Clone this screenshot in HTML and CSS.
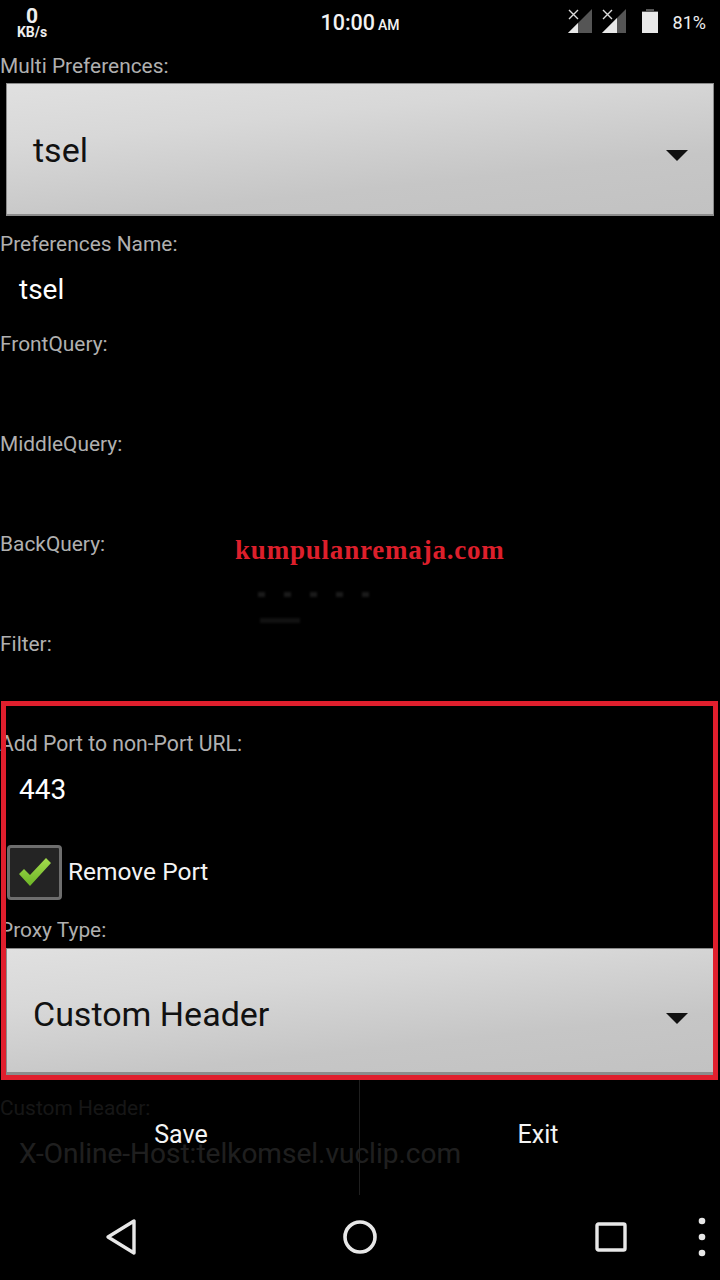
FILE: index.html
```html
<!DOCTYPE html>
<html lang="en">
<head>
<meta charset="utf-8">
<title>Preferences</title>
<link rel="stylesheet" href="styles.css">
</head>
<body>
<div class="screen">
  <header class="status">
    <div class="speed"><span class="speed-num">0</span><span class="speed-unit">KB/s</span></div>
    <div class="clock">10:00<span class="ampm">AM</span></div>
    <div class="indicators">
      <svg class="sig sig-a" width="26" height="26" viewBox="0 0 26 26">
        <path d="M25 1V25H1Z" fill="#555"/><path d="M11 15V25H1Z" fill="#e8e8e8"/>
        <path d="M2 2L11 11M11 2L2 11" stroke="#ddd" stroke-width="1.4" fill="none"/>
      </svg>
      <svg class="sig sig-b" width="26" height="26" viewBox="0 0 26 26">
        <path d="M25 1V25H1Z" fill="#555"/><path d="M16 10V25H1Z" fill="#e8e8e8"/>
        <path d="M2 2L11 11M11 2L2 11" stroke="#ddd" stroke-width="1.4" fill="none"/>
      </svg>
      <svg class="batt" width="16" height="26" viewBox="0 0 16 26">
        <path d="M4 1H12V3H16V25H0V3H4Z" fill="#e8e8e8"/><path d="M4 1H12V3H16V4H0V3H4Z" fill="#555"/>
      </svg>
      <span class="pct">81%</span>
    </div>
  </header>

  <main class="form">
    <label class="lbl">Multi Preferences:</label>
    <div class="spinner spinner-a"><span>tsel</span><i class="arrow"></i></div>

    <label class="lbl lbl-after-spin">Preferences Name:</label>
    <div class="field">tsel</div>
    <label class="lbl">FrontQuery:</label>
    <div class="field"></div>
    <label class="lbl">MiddleQuery:</label>
    <div class="field"></div>
    <label class="lbl">BackQuery:</label>
    <div class="field"></div>
    <label class="lbl">Filter:</label>
    <div class="field"></div>
    <label class="lbl lbl-port">Add Port to non-Port URL:</label>
    <div class="field">443</div>

    <div class="check-row">
      <span class="check">
        <svg width="36" height="32" viewBox="0 0 36 32"><defs><linearGradient id="tick" x1="0" y1="0" x2="0" y2="1"><stop offset="0" stop-color="#a4dc4e"/><stop offset="1" stop-color="#6cb526"/></linearGradient></defs><path d="M2 18L7 13L13 19L29 2L34 7L13 30Z" fill="url(#tick)"/></svg>
      </span>
      <span class="check-text">Remove Port</span>
    </div>

    <label class="lbl lbl-proxy">Proxy Type:</label>
    <div class="spinner spinner-b"><span>Custom Header</span><i class="arrow"></i></div>

    <label class="lbl lbl-after-proxy">Custom Header:</label>
    <div class="field">X-Online-Host:telkomsel.vuclip.com</div>
  </main>

  <div class="watermark">kumpulanremaja.com</div>
  <div class="smudge smudge-a"></div>
  <div class="smudge smudge-b"></div>
  <div class="redbox"></div>

  <div class="actions">
    <button class="act act-save">Save</button>
    <button class="act act-exit">Exit</button>
  </div>

  <nav class="nav">
    <svg class="nav-back" width="32" height="38" viewBox="0 0 32 38"><path d="M29 3V35L3 19Z" fill="none" stroke="#e8e8e8" stroke-width="3.4" stroke-linejoin="round"/></svg>
    <svg class="nav-home" width="36" height="36" viewBox="0 0 36 36"><circle cx="18" cy="18" r="15" fill="none" stroke="#e8e8e8" stroke-width="3.6"/></svg>
    <svg class="nav-recent" width="32" height="30" viewBox="0 0 32 30"><rect x="2" y="2" width="28" height="26" rx="1.5" fill="none" stroke="#e8e8e8" stroke-width="3.4"/></svg>
    <svg class="nav-more" width="8" height="40" viewBox="0 0 8 40"><circle cx="4" cy="4" r="3.3" fill="#e8e8e8"/><circle cx="4" cy="20" r="3.3" fill="#e8e8e8"/><circle cx="4" cy="36" r="3.3" fill="#e8e8e8"/></svg>
  </nav>
</div>
</body>
</html>
```
FILE: styles.css
```css
* { box-sizing: border-box; }
html, body { margin: 0; padding: 0; background: #000; }
body { font-family: Roboto, "Liberation Sans", sans-serif; }

.screen {
  position: relative;
  width: 720px;
  height: 1280px;
  overflow: hidden;
  background: #000;
  display: flex;
  flex-direction: column;
  color: #fff;
}

/* status bar */
.status {
  height: 51px;
  flex: none;
  display: grid;
  grid-template-columns: 1fr auto 1fr;
  align-items: start;
}
.speed {
  display: flex;
  flex-direction: column;
  align-items: center;
  width: 64px;
  padding-top: 7px;
  font-weight: 700;
  color: #eee;
}
.speed-num { font-size: 21px; line-height: 19px; }
.speed-unit { font-size: 14px; line-height: 13px; }
.clock {
  padding-top: 10px;
  font-size: 21.5px;
  line-height: 26px;
  font-weight: 500;
  color: #f2f2f2;
}
.ampm { font-size: 14px; margin-left: 3px; }
.indicators {
  display: flex;
  justify-content: flex-end;
  align-items: flex-start;
  padding: 8px 14px 0 0;
}
.sig-b { margin-left: 8px; }
.batt { margin-left: 15px; }
.pct { margin-left: 15px; font-size: 18px; line-height: 30px; color: #eee; }

/* form */
.form { flex: none; display: flex; flex-direction: column; }
.lbl {
  height: 30px;
  line-height: 30px;
  font-size: 20.9px;
  color: #b0b0b0;
}
.lbl-port { font-size: 21.2px; }
.field {
  height: 70px;
  padding: 1px 0 0 19px;
  font-size: 28px;
  line-height: 60px;
  color: #fff;
}
.spinner {
  margin: 0 6px;
  border: 1px solid #8a8a8a;
  border-bottom: 2px solid #8c8c8c;
  background: linear-gradient(174deg, #e0e0e0 0%, #d8d8d8 30%, #c6c6c6 70%, #c2c2c2 100%);
  display: flex;
  align-items: center;
  justify-content: space-between;
  padding: 0 25px 0 26px;
  font-size: 34px;
  color: #111;
}
.spinner-a { height: 133px; margin-top: 2px; padding-top: 2px; }
.spinner-a .arrow { margin-top: 11px; }
.spinner-b { height: 127px; margin-top: 3px; padding-top: 7px; border-bottom-width: 3px; }
.arrow {
  width: 0;
  height: 0;
  border-left: 11px solid transparent;
  border-right: 11px solid transparent;
  border-top: 11px solid #111;
  margin-top: 9px;
}
.lbl-after-spin { margin-top: 13px; }
.lbl-proxy { margin-top: 15px; height: 30px; }
.lbl-after-proxy { margin-top: 18px; }

.check-row {
  display: flex;
  align-items: center;
  height: 56px;
  margin-top: 15px;
  padding-left: 7px;
}
.check {
  width: 55px;
  height: 55px;
  border: 3px solid #6e6e6e;
  border-radius: 4px;
  background: #242424;
  display: flex;
  align-items: center;
  justify-content: center;
}
.check-text { margin: 0 0 2px 6px; font-size: 24.5px; color: #f4f4f4; }

/* overlays */
.watermark {
  position: absolute;
  left: 235px;
  top: 534px;
  font-family: "Liberation Serif", serif;
  font-weight: 700;
  font-size: 27px;
  line-height: 32px;
  letter-spacing: 0.8px;
  color: #dd1f2b;
}
.smudge {
  position: absolute;
  height: 5px;
  background: repeating-linear-gradient(90deg, #1a1a1a 0 7px, #000 7px 26px);
  filter: blur(1px);
}
.smudge-a { left: 258px; top: 592px; width: 122px; }
.smudge-b { left: 260px; top: 618px; width: 40px; background: #111; }
.redbox {
  position: absolute;
  left: 1px;
  top: 701px;
  width: 717px;
  height: 379px;
  border: 5px solid #e01f2d;
  pointer-events: none;
}
.actions {
  position: absolute;
  left: 0;
  top: 1080px;
  width: 720px;
  height: 115px;
  display: grid;
  grid-template-columns: 359px 361px;
  background: rgba(0, 0, 0, 0.88);
}
.act {
  border: 0;
  padding: 0 0 7px;
  background: none;
  font-family: inherit;
  font-size: 25px;
  color: #f4f4f4;
}
.act-save { padding-left: 3px; }
.act-exit { border-left: 1px solid #1f1f1f; padding-right: 4px; }

/* navigation */
.nav {
  position: absolute;
  left: 0;
  bottom: 0;
  width: 720px;
  height: 80px;
  background: #000;
}
.nav svg { position: absolute; }
.nav-back { left: 105px; top: 18px; }
.nav-home { left: 342px; top: 19px; }
.nav-recent { left: 595px; top: 22px; }
.nav-more { left: 698px; top: 17px; }
```
